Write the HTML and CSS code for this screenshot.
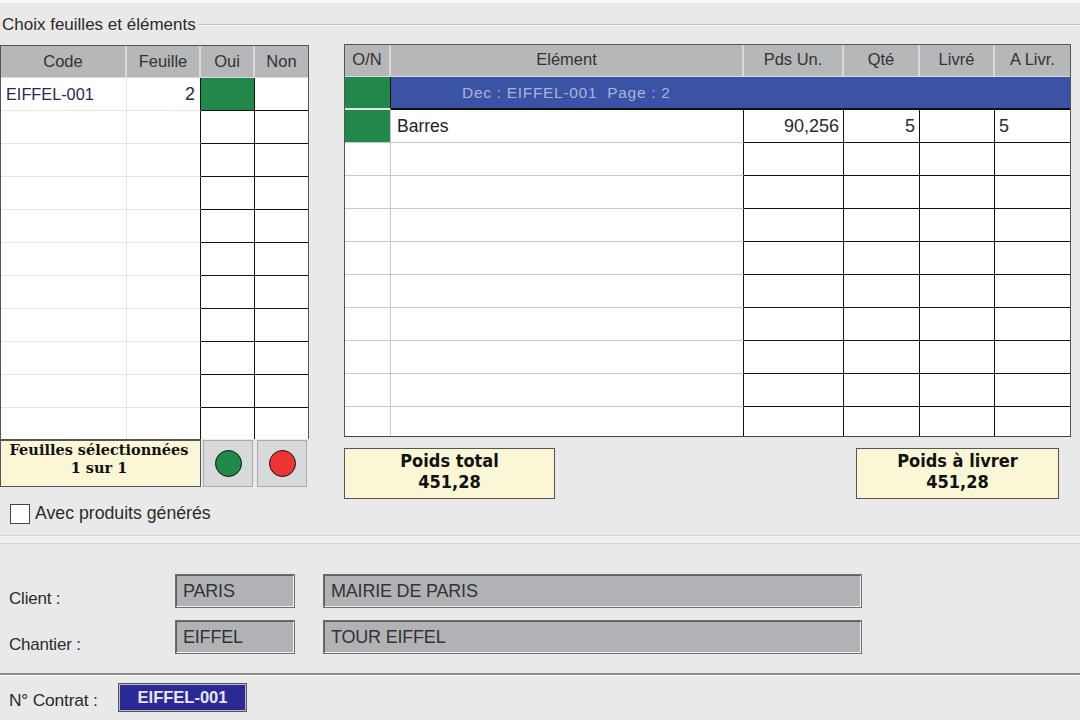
FILE: index.html
```html
<!DOCTYPE html>
<html lang="fr">

<head>
    <meta charset="UTF-8">
    <title>Choix feuilles et éléments</title>
    <link rel="stylesheet" href="styles.css">
</head>

<body>
    <div class="top-strip"></div>

    <div class="legend">
        <span class="legend-text">Choix feuilles et éléments</span>
        <span class="legend-line"></span>
    </div>

    <div class="choice">
        <div class="left-panel">
            <table class="grid sheet-grid">
                <colgroup>
                    <col class="col-code"><col class="col-sheet"><col class="col-yes"><col class="col-no">
                </colgroup>
                <thead>
                    <tr><th>Code</th><th>Feuille</th><th>Oui</th><th>Non</th></tr>
                </thead>
                <tbody>
                    <tr><td class="soft code">EIFFEL-001</td><td class="soft num">2</td><td class="hard green"></td><td class="hard"></td></tr>
                    <tr><td class="soft"></td><td class="soft"></td><td class="hard"></td><td class="hard"></td></tr>
                    <tr><td class="soft"></td><td class="soft"></td><td class="hard"></td><td class="hard"></td></tr>
                    <tr><td class="soft"></td><td class="soft"></td><td class="hard"></td><td class="hard"></td></tr>
                    <tr><td class="soft"></td><td class="soft"></td><td class="hard"></td><td class="hard"></td></tr>
                    <tr><td class="soft"></td><td class="soft"></td><td class="hard"></td><td class="hard"></td></tr>
                    <tr><td class="soft"></td><td class="soft"></td><td class="hard"></td><td class="hard"></td></tr>
                    <tr><td class="soft"></td><td class="soft"></td><td class="hard"></td><td class="hard"></td></tr>
                    <tr><td class="soft"></td><td class="soft"></td><td class="hard"></td><td class="hard"></td></tr>
                    <tr><td class="soft"></td><td class="soft"></td><td class="hard"></td><td class="hard"></td></tr>
                    <tr class="last"><td class="soft"></td><td class="soft"></td><td class="hard"></td><td class="hard"></td></tr>
                </tbody>
            </table>

            <div class="sheet-footer">
                <div class="note note-small">Feuilles sélectionnées<br>1 sur 1</div>
                <button class="dot-button"><span class="dot dot-green"></span></button>
                <button class="dot-button"><span class="dot dot-red"></span></button>
            </div>

            <label class="check-row">
                <span class="check-box"></span>
                <span>Avec produits générés</span>
            </label>
        </div>

        <div class="right-panel">
            <table class="grid element-grid">
                <colgroup>
                    <col class="col-on"><col class="col-element"><col class="col-weight"><col class="col-qty"><col class="col-done"><col class="col-todo">
                </colgroup>
                <thead>
                    <tr><th>O/N</th><th>Elément</th><th>Pds Un.</th><th>Qté</th><th>Livré</th><th>A Livr.</th></tr>
                </thead>
                <tbody>
                    <tr class="group-row"><td class="soft green"></td><td colspan="5" class="group-title">Dec : EIFFEL-001&nbsp; Page : 2</td></tr>
                    <tr><td class="soft green"></td><td class="soft item">Barres</td><td class="hard num">90,256</td><td class="hard num">5</td><td class="hard"></td><td class="hard todo">5</td></tr>
                    <tr><td class="soft"></td><td class="soft"></td><td class="hard"></td><td class="hard"></td><td class="hard"></td><td class="hard"></td></tr>
                    <tr><td class="soft"></td><td class="soft"></td><td class="hard"></td><td class="hard"></td><td class="hard"></td><td class="hard"></td></tr>
                    <tr><td class="soft"></td><td class="soft"></td><td class="hard"></td><td class="hard"></td><td class="hard"></td><td class="hard"></td></tr>
                    <tr><td class="soft"></td><td class="soft"></td><td class="hard"></td><td class="hard"></td><td class="hard"></td><td class="hard"></td></tr>
                    <tr><td class="soft"></td><td class="soft"></td><td class="hard"></td><td class="hard"></td><td class="hard"></td><td class="hard"></td></tr>
                    <tr><td class="soft"></td><td class="soft"></td><td class="hard"></td><td class="hard"></td><td class="hard"></td><td class="hard"></td></tr>
                    <tr><td class="soft"></td><td class="soft"></td><td class="hard"></td><td class="hard"></td><td class="hard"></td><td class="hard"></td></tr>
                    <tr><td class="soft"></td><td class="soft"></td><td class="hard"></td><td class="hard"></td><td class="hard"></td><td class="hard"></td></tr>
                    <tr class="last"><td class="soft"></td><td class="soft"></td><td class="hard"></td><td class="hard"></td><td class="hard"></td><td class="hard"></td></tr>
                </tbody>
            </table>

            <div class="totals">
                <div class="note note-total total-left">Poids total<br>451,28</div>
                <div class="note note-total total-right">Poids à livrer<br>451,28</div>
            </div>
        </div>
    </div>

    <div class="double-rule"></div>

    <div class="info-row row-client">
        <span class="info-label">Client :</span>
        <span class="field field-short">PARIS</span>
        <span class="field field-long">MAIRIE DE PARIS</span>
    </div>
    <div class="info-row row-site">
        <span class="info-label">Chantier :</span>
        <span class="field field-short">EIFFEL</span>
        <span class="field field-long">TOUR EIFFEL</span>
    </div>

    <div class="contract">
        <span class="contract-label">N° Contrat :</span>
        <span class="contract-value">EIFFEL-001</span>
    </div>
</body>

</html>
```
FILE: styles.css
```css
html, body {
    height: 720px;
    overflow: hidden;
}

body {
    margin: 0;
    background-color: #e9e9e9;
    color: #2b2b2b;
    font-family: "Liberation Sans", Arial, sans-serif;
    font-size: 17px;
}

.top-strip {
    height: 3px;
    background-color: #f8f8f8;
}

.legend {
    display: flex;
    align-items: center;
    height: 41px;
    padding-left: 2px;
}

.legend-text {
    margin-top: 3px;
    font-size: 17px;
}

.legend-line {
    flex: 1;
    height: 1px;
    margin: 1px 0 0 2px;
    background-color: #c4c4c4;
    box-shadow: 0 1px 0 #f6f6f6;
}

.choice {
    display: flex;
    gap: 35px;
    height: 491px;
}

/* grids */
.grid {
    table-layout: fixed;
    border-collapse: separate;
    border-spacing: 0;
    background-color: #fff;
    border: 1px solid #555;
    border-bottom: 0;
}

.grid th {
    height: 31px;
    padding: 0;
    background-color: #b6b7b9;
    border-right: 2px solid #d9d9d9;
    border-bottom: 1px solid #d9d9d9;
    font-size: 16.5px;
    font-weight: normal;
    color: #333;
}

.grid th:last-child {
    border-right: 0;
}

.grid td {
    height: 32px;
    padding: 0;
    box-sizing: content-box;
    font-size: 16px;
}

.grid td.soft {
    border-right: 1px solid #e4e4e4;
    border-bottom: 1px solid #e4e4e4;
}

.grid td.hard {
    border-right: 1px solid #111;
    border-bottom: 1px solid #111;
}

.grid td:last-child {
    border-right: 0;
}

.grid .last td {
    height: 31px;
    border-bottom: 0;
}

.grid td.green {
    background-color: #22884a;
}

.grid .num {
    padding-right: 4px;
    text-align: right;
    font-size: 18px;
}

/* left part */
.left-panel {
    width: 309px;
    padding-top: 1px;
}

.sheet-grid {
    width: 309px;
}

.sheet-grid .num {
    padding-right: 5px;
}

.sheet-grid td.soft:nth-child(2) {
    border-right: 1px solid #111;
}

.col-code { width: 126px; }
.col-sheet { width: 74px; }
.col-yes { width: 54px; }
.col-no { width: 53px; }

.code {
    padding-left: 5px !important;
    color: #26265e;
    font-size: 16.3px !important;
}

.sheet-footer {
    display: flex;
    align-items: flex-start;
}

.note {
    box-sizing: border-box;
    background-color: #fbf6d6;
    border: 1px solid #555;
    color: #111;
    font-family: "DejaVu Serif", serif;
    font-weight: bold;
    text-align: center;
}

.note-small {
    width: 201px;
    height: 48px;
    padding: 0 3px 0 0;
    border-width: 2px 1px 1px 1px;
    font-size: 14.5px;
    line-height: 18px;
}

.dot-button {
    display: flex;
    align-items: center;
    justify-content: center;
    box-sizing: border-box;
    width: 50px;
    height: 47px;
    margin: 1px 0 0 2px;
    padding: 0;
    background-color: #d8d9da;
    border: 1px solid #a9a9a9;
}

.dot-button + .dot-button {
    margin-left: 4px;
}

.dot {
    width: 25px;
    height: 25px;
    border: 1px solid #111;
    border-radius: 50%;
}

.dot-green { background-color: #1f8a47; }
.dot-red { background-color: #ee3333; }

.check-row {
    display: flex;
    align-items: center;
    gap: 5px;
    margin: 16px 0 0 10px;
    font-size: 17.7px;
}

.check-box {
    box-sizing: border-box;
    width: 20px;
    height: 20px;
    background-color: #fff;
    border: 1px solid #444;
}

/* right part */
.right-panel {
    width: 727px;
}

.element-grid {
    width: 727px;
    border-bottom: 1px solid #444;
}

.element-grid th {
    padding-bottom: 2px;
    height: 29px;
}

.element-grid td.soft {
    border-right-color: #c8c8c8;
    border-bottom-color: #c8c8c8;
}

.element-grid .last td {
    height: 29px;
}

.element-grid td.soft:nth-child(2) {
    border-right-color: #111;
}

.col-on { width: 46px; }
.col-element { width: 353px; }
.col-weight { width: 100px; }
.col-qty { width: 76px; }
.col-done { width: 75px; }
.col-todo { width: 75px; }

.group-row td {
    height: 31px;
    background-color: #3a53a4;
    border-bottom: 2px solid #111;
}

.group-row td.green {
    background-color: #22884a;
    border-right: 1px solid #111;
    border-bottom: 2px solid #e4e4e4;
}

.group-title {
    padding-left: 71px !important;
    color: #a9b4dc;
    font-size: 15.5px !important;
    letter-spacing: 0.7px;
}

.item {
    padding-left: 6px !important;
    color: #222;
    font-size: 17.5px !important;
}

.todo {
    padding-left: 4px !important;
    font-size: 18px !important;
}

.totals {
    display: flex;
    justify-content: space-between;
    margin-top: 11px;
    padding-right: 12px;
}

.note-total {
    height: 51px;
    padding-top: 1px;
    font-family: "DejaVu Sans", sans-serif;
    font-stretch: condensed;
    font-size: 18px;
    line-height: 21px;
}

.total-left { width: 211px; }
.total-right { width: 203px; }

/* bottom part */
.double-rule {
    height: 7px;
    border-top: 1px solid #d3d3d3;
    border-bottom: 1px solid #d3d3d3;
    background-color: #efefef;
}

.info-row {
    display: flex;
    align-items: flex-start;
}

.row-client {
    margin-top: 30px;
}

.row-site {
    margin-top: 11px;
}

.info-label {
    width: 175px;
    padding: 15px 0 0 9px;
    box-sizing: border-box;
    font-size: 17px;
    letter-spacing: -0.2px;
}

.field {
    box-sizing: border-box;
    height: 34px;
    padding-left: 6px;
    background-color: #b1b2b5;
    border: 2px solid #5f5f62;
    border-right-color: #f3f3f3;
    border-bottom-color: #f3f3f3;
    outline: 1px solid #6d6d6f;
    outline-offset: -1px;
    color: #333;
    font-size: 18px;
    line-height: 31px;
    letter-spacing: -0.2px;
}

.field-short {
    width: 120px;
}

.field-long {
    width: 539px;
    margin-left: 28px;
}

.contract {
    display: flex;
    align-items: flex-start;
    height: 46px;
    margin-top: 18px;
    padding: 8px 0 0 9px;
    border-top: 2px solid #8a8a8a;
    box-shadow: inset 0 1px 0 #fff;
}

.contract-label {
    width: 109px;
    padding-top: 7px;
    font-size: 17.4px;
    letter-spacing: -0.2px;
}

.contract-value {
    box-sizing: border-box;
    width: 129px;
    height: 29px;
    background-color: #2a2a96;
    border: 2px solid #b9b9c6;
    outline: 1px solid #555;
    outline-offset: -1px;
    color: #e6e6f5;
    font-size: 16.5px;
    font-weight: bold;
    line-height: 25px;
    text-align: center;
}
```
